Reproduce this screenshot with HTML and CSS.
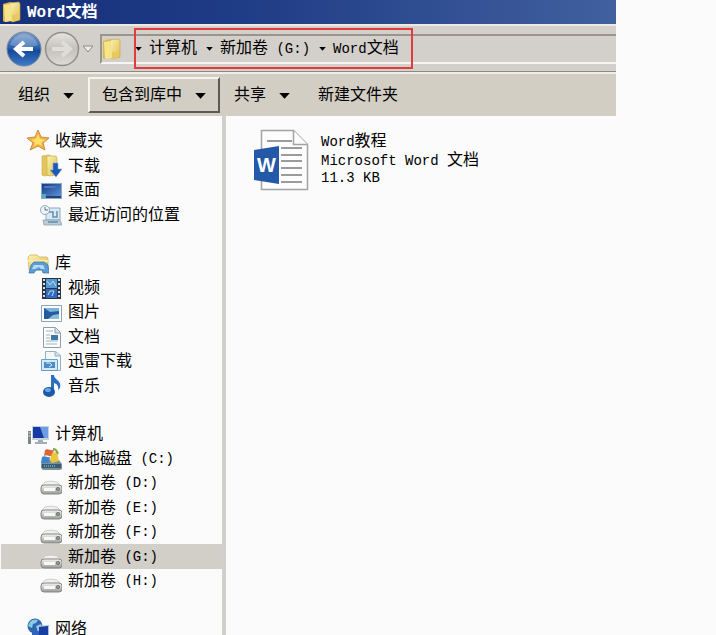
FILE: index.html
```
<!DOCTYPE html>
<html lang="zh-CN">
<head>
    <meta charset="UTF-8">
    <meta name="viewport" content="width=device-width, initial-scale=1.0">
    <title>Word文档</title>
    <link rel="stylesheet" href="styles.css">
</head>
<body>
    <svg class="defs" aria-hidden="true">
        <defs>
            <linearGradient id="yellow" x1="0" y1="0" x2="1" y2="1">
                <stop offset="0" stop-color="#fbf3b4"/>
                <stop offset="1" stop-color="#dfbd4e"/>
            </linearGradient>
            <linearGradient id="blue" x1="0" y1="0" x2="1" y2="1">
                <stop offset="0" stop-color="#173a86"/>
                <stop offset="1" stop-color="#5b92d8"/>
            </linearGradient>
            <linearGradient id="metal" x1="0" y1="0" x2="0" y2="1">
                <stop offset="0" stop-color="#f4f4f2"/>
                <stop offset="1" stop-color="#9a9c9a"/>
            </linearGradient>
            <linearGradient id="back-fill" x1="0" y1="0" x2="0" y2="1">
                <stop offset="0" stop-color="#7f9fcb"/>
                <stop offset="0.45" stop-color="#2c62ae"/>
                <stop offset="0.55" stop-color="#164a98"/>
                <stop offset="1" stop-color="#3f7cc8"/>
            </linearGradient>
            <linearGradient id="next-fill" x1="0" y1="0" x2="0" y2="1">
                <stop offset="0" stop-color="#e6e4e0"/>
                <stop offset="0.5" stop-color="#c4c1bb"/>
                <stop offset="1" stop-color="#dedbd6"/>
            </linearGradient>
        </defs>
        <symbol id="folder" viewBox="0 0 20 22">
            <path d="M1 3l7-2 3 1v17l-8 2-2-1z" fill="#d9b84c"/>
            <path d="M8 2l9-1 1 2v16l-8 2-2-3z" fill="url(#yellow)" stroke="#c9a43c" stroke-width=".6"/>
            <path d="M2 4l6-1 2 17-7 1z" fill="#f6e588"/>
            <path d="M10 14l7-1v6l-7 2z" fill="#e7c95f"/>
        </symbol>
        <symbol id="star" viewBox="0 0 22 24">
            <path d="M11 1l3 7 8 1-6 5 2 7-7-4-8 4 3-7-6-5 8-1z" fill="#f6b53c" stroke="#c98a4a"/>
            <path d="M11 5l2 5 5 1-4 3 1 3-4-2-4 2 1-4-4-2 5-1z" fill="#ffe16a"/>
        </symbol>
        <symbol id="download" viewBox="0 0 22 24">
            <path d="M2 2l7-1 2 1v19l-7 1-2-1z" fill="#e4c65c" stroke="#c7a74a" stroke-width=".6"/>
            <path d="M7 2h9l1 2v17l-8 1-2-2z" fill="url(#yellow)" stroke="#c7a74a" stroke-width=".6"/>
            <path d="M13 9h5v6h4l-6 8-6-7h3z" fill="#1e57b5" stroke="#7fa7dc" stroke-width=".6"/>
        </symbol>
        <symbol id="desktop" viewBox="0 0 22 24">
            <path d="M1 5h21v16H1z" fill="#8ea9c8"/>
            <path d="M2 6h19v12H2z" fill="url(#blue)"/>
            <path d="M4 8h13l-3 2H4z" fill="#5078bd"/>
            <path d="M2 18h19v2H2z" fill="#23406f"/>
            <path d="M2 16h4v4H2z" fill="#58a8cc"/>
        </symbol>
        <symbol id="recent" viewBox="0 0 22 24">
            <path d="M6 5h14v12H6z" fill="#dbe8f3" stroke="#8daac2"/>
            <path d="M3 17h17l2 5H4z" fill="#b9cbd9" stroke="#849bab" stroke-width=".7"/>
            <path d="M9 9h4v5h4V8M8 19h10" fill="none" stroke="#618eae" stroke-width="1.5"/>
            <circle cx="5" cy="7" r="4.5" fill="#eef4f8" stroke="#96aabc"/>
            <path d="M5 4v3h3" fill="none" stroke="#54728c"/>
        </symbol>
        <symbol id="library" viewBox="0 0 22 24">
            <path d="M1 6l2-2h7l2 2h8l1 2v11H2z" fill="url(#yellow)" stroke="#cfaa53" stroke-width=".7"/>
            <path d="M1 9h20v2H1z" fill="#f8eba6"/>
            <path d="M4 14l3-3h10l4 3 1 8h-6l-1-3h-6l-2 3H2z" fill="#5b9dd6" stroke="#376fae" stroke-width=".7"/>
            <path d="M7 14h9l2 4h-4l-2-2-4 2H5z" fill="#b5dcf3"/>
        </symbol>
        <symbol id="video" viewBox="0 0 22 24">
            <path d="M2 2h19v21H2z" fill="#2b3442"/>
            <path d="M6 3h11v9H6z" fill="#5598d4"/>
            <path d="M6 13h11v9H6z" fill="#2f6cc0"/>
            <path d="M7 5l3 4 3-4 3 5M8 19l2-4h4l-2 5" fill="none" stroke="#bcdcf3"/>
            <path d="M4 3v20M19 3v20" stroke="#d5dde5" stroke-width="2" stroke-dasharray="2 2"/>
        </symbol>
        <symbol id="picture" viewBox="0 0 22 24">
            <path d="M1.500 5.500h20v16h-20z" fill="#fbfcfd" stroke="#8ca5b9"/>
            <path d="M4 8h15v11H4z" fill="#7db3dc"/>
            <path d="M4 8l6 4 9-1v8H4z" fill="#245b9f"/>
            <path d="M8 19l5-4 6-1v5z" fill="#8bbbd6"/>
        </symbol>
        <symbol id="document" viewBox="0 0 22 24">
            <path d="M3.500 2.500h12l5 5v15h-17z" fill="#fafcfd" stroke="#8f9da8"/>
            <path d="M15 3v5h5" fill="#d9e1e7" stroke="#8f9da8"/>
            <path d="M6 6h7M6 10h4M6 13h4M6 16h12M6 19h11" stroke="#9eb1bf"/>
            <path d="M11 10h7v5h-7z" fill="#3b79a8"/>
        </symbol>
        <symbol id="thunder" viewBox="0 0 22 24">
            <path d="M5.500 2.500h10l5 4v15h-15z" fill="#f2f7fa" stroke="#8fb0c5"/>
            <path d="M15 3v4h5" fill="#d0e1ec" stroke="#8fb0c5"/>
            <path d="M1.500 10.500h16v11h-16z" fill="#d5eaf7" stroke="#6c9fc5"/>
            <path d="M4 13h11v6H4z" fill="#4b8cc9"/>
            <path d="M6 14h4l2 2-3 2" fill="none" stroke="#d4ecfa"/>
        </symbol>
        <symbol id="music" viewBox="0 0 22 24">
            <path d="M11 1h3c0 5 8 5 6 13l-2 2c1-4-1-6-4-7v9H11z" fill="#2b6fbf"/>
            <ellipse cx="9" cy="18" rx="6" ry="5" fill="#1d59a9"/>
            <ellipse cx="8" cy="16" rx="3" ry="2" fill="#6ba6de"/>
        </symbol>
        <symbol id="computer" viewBox="0 0 22 24">
            <path d="M1 9h3v13H1z" fill="#7f8585"/>
            <path d="M1.500 11h2M1.500 14h2" stroke="#dadddd"/>
            <path d="M5 4h17v14H5z" fill="#c8d1da"/>
            <path d="M6 5h15v11H6z" fill="#1539a5"/>
            <path d="M13 5h8v11h-4z" fill="#6c9ee5"/>
            <path d="M11 18h5v2h4v2H8v-2h3z" fill="#a1acb4"/>
        </symbol>
        <symbol id="system" viewBox="0 0 22 24">
            <path d="M3 13h16l3 4v5l-2 1H3l-2-2v-4z" fill="#7d9092"/>
            <path d="M2 17h19v4H2z" fill="#365c78"/>
            <path d="M4 19h11" stroke="#b1d1dd" stroke-dasharray="1 1"/>
            <path d="M5 3c3-2 5 1 9 0l-2 6c-3 1-5-2-8 0z" fill="#dc6436"/>
            <path d="M2 10c3-2 5 1 8 0l-1 6H1z" fill="#3e83cd"/>
            <path d="M12 6l5-1 2 9-7 2-2-3z" fill="#eac53e"/>
            <path d="M13 2c4 0 4 3 5 5" fill="none" stroke="#83a447" stroke-width="2"/>
        </symbol>
        <symbol id="drive" viewBox="0 0 22 24">
            <path d="M5 11q6-2 12 0l4 4H1z" fill="#f0f0ee" stroke="#bfc0be" stroke-width=".7"/>
            <rect x="1" y="14" width="21" height="9" rx="3" fill="url(#metal)" stroke="#858785"/>
            <path d="M4 17h11v3H4z" fill="#f8f8f7"/>
            <circle cx="18" cy="18" r="2" fill="#64716a"/>
            <circle cx="18" cy="18" r=".8" fill="#a4d1a7"/>
        </symbol>
        <symbol id="network" viewBox="0 0 22 24">
            <circle cx="8" cy="9" r="7.500" fill="#2e68b2"/>
            <path d="M3 5c2-3 6-3 8-2l-2 3-3 1-1 4-4-2zM9 9l5-2 1 4-4 4z" fill="#8bcbe0"/>
            <path d="M11 9l11-1v11l-11 2z" fill="#a8bdd7"/>
            <path d="M12 10l9-1v9l-9 2z" fill="#1740a2"/>
            <path d="M5 15l7-1v8H5z" fill="#3162bc"/>
        </symbol>
    </svg>

    <header class="window-head">
        <div class="title-bar">
            <svg class="title-icon" aria-hidden="true"><use href="#folder"/></svg>
            <h1><span class="latin">Word</span>文档</h1>
        </div>

        <div class="nav-bar">
            <button class="round" aria-label="后退">
                <svg viewBox="0 0 36 36">
                    <circle cx="18" cy="18" r="17" fill="url(#back-fill)" stroke="#6f86a5"/>
                    <path d="M4 14a14.500 14.500 0 0 1 28 0q-14 5-28 0z" fill="#fff" opacity=".22"/>
                    <path d="M27 18H11M18 11l-8 7 8 7" fill="none" stroke="#fff" stroke-width="4"/>
                </svg>
            </button>
            <button class="round" aria-label="前进">
                <svg viewBox="0 0 36 36">
                    <circle cx="18" cy="18" r="16.500" fill="url(#next-fill)" stroke="#8f8e8b" stroke-width="1.500"/>
                    <path d="M8 18h17M18 11l8 7-8 7" fill="none" stroke="#dfddd9" stroke-width="4"/>
                </svg>
            </button>
            <button class="history" aria-label="最近浏览">
                <svg viewBox="0 0 12 8"><path d="M1 1h10L6 7z" fill="#eeece8" stroke="#8e8b85"/></svg>
            </button>
            <div class="address">
                <svg class="address-icon" aria-hidden="true"><use href="#folder"/></svg>
                <nav class="crumbs" aria-label="路径">
                    <a href="#">计算机</a>
                    <a href="#">新加卷<span class="latin"> (G:)</span></a>
                    <a href="#"><span class="latin">Word</span>文档</a>
                </nav>
            </div>
        </div>

        <div class="toolbar">
            <button class="tool menu">组织</button>
            <button class="tool menu raised">包含到库中</button>
            <button class="tool menu">共享</button>
            <button class="tool">新建文件夹</button>
        </div>
    </header>

    <div class="body">
        <aside class="tree">
            <section class="group">
                <a href="#" class="row root"><svg><use href="#star"/></svg>收藏夹</a>
                <a href="#" class="row"><svg><use href="#download"/></svg>下载</a>
                <a href="#" class="row"><svg><use href="#desktop"/></svg>桌面</a>
                <a href="#" class="row"><svg><use href="#recent"/></svg>最近访问的位置</a>
            </section>
            <section class="group">
                <a href="#" class="row root"><svg><use href="#library"/></svg>库</a>
                <a href="#" class="row"><svg><use href="#video"/></svg>视频</a>
                <a href="#" class="row"><svg><use href="#picture"/></svg>图片</a>
                <a href="#" class="row"><svg><use href="#document"/></svg>文档</a>
                <a href="#" class="row"><svg><use href="#thunder"/></svg>迅雷下载</a>
                <a href="#" class="row"><svg><use href="#music"/></svg>音乐</a>
            </section>
            <section class="group">
                <a href="#" class="row root"><svg><use href="#computer"/></svg>计算机</a>
                <a href="#" class="row"><svg><use href="#system"/></svg>本地磁盘<span class="latin"> (C:)</span></a>
                <a href="#" class="row"><svg><use href="#drive"/></svg>新加卷<span class="latin"> (D:)</span></a>
                <a href="#" class="row"><svg><use href="#drive"/></svg>新加卷<span class="latin"> (E:)</span></a>
                <a href="#" class="row"><svg><use href="#drive"/></svg>新加卷<span class="latin"> (F:)</span></a>
                <a href="#" class="row selected"><svg><use href="#drive"/></svg>新加卷<span class="latin"> (G:)</span></a>
                <a href="#" class="row"><svg><use href="#drive"/></svg>新加卷<span class="latin"> (H:)</span></a>
            </section>
            <section class="group">
                <a href="#" class="row root"><svg><use href="#network"/></svg>网络</a>
            </section>
        </aside>

        <main class="files">
            <a href="#" class="file">
                <span class="file-icon">
                    <svg viewBox="0 0 56 62" aria-hidden="true">
                        <path d="M8.500 1.500h32l14 14v45h-46z" fill="#fdfdfd" stroke="#a3a3a3" stroke-width="1.500"/>
                        <path d="M40.500 1.500v14h14" fill="#fdfdfd" stroke="#a3a3a3" stroke-width="1.500"/>
                        <path d="M14 12h25M28 19h21M28 26h21M28 32h21M28 39h21M28 46h21M28 53h21" stroke="#9b9b9b" stroke-width="2"/>
                        <path d="M1 21l25-4v38L1 51z" fill="#2458a8"/>
                    </svg>
                    <b>W</b>
                </span>
                <span class="file-info">
                    <span><span class="latin">Word</span>教程</span>
                    <span><span class="latin">Microsoft Word </span>文档</span>
                    <span class="latin">11.3 KB</span>
                </span>
            </a>
        </main>
    </div>
</body>
</html>
```
FILE: styles.css
```
* {
    box-sizing: border-box;
}

body {
    display: flex;
    flex-direction: column;
    height: 100vh;
    margin: 0;
    overflow: hidden;
    background: #fbfbfb;
    color: #000;
    font-family: "Liberation Sans", "Noto Sans CJK SC", sans-serif;
    font-size: 16px;
    line-height: 24px;
}

a {
    color: inherit;
    text-decoration: none;
}

button {
    padding: 0;
    border: none;
    background: none;
    color: inherit;
    font: inherit;
}

svg {
    display: block;
    flex: none;
}

.defs {
    position: absolute;
    width: 0;
    height: 0;
}

.latin {
    font-family: "Liberation Mono", monospace;
    font-size: 14px;
    white-space: pre;
}

/* 窗口顶部 */
.window-head {
    flex: none;
    margin-right: 100px;
    background: #d2cec6;
}

.title-bar {
    display: flex;
    align-items: center;
    gap: 5px;
    height: 24px;
    padding-left: 2px;
    background: linear-gradient(to right, #17307a, #1f3c86 40%, #41609e);
    color: #fff;
}

.title-icon {
    width: 20px;
    height: 22px;
}

.title-bar h1 {
    margin: 0;
    font-size: 16px;
}

.title-bar .latin {
    font-size: 16px;
}

.nav-bar {
    display: flex;
    align-items: center;
    height: 48px;
    padding-left: 6px;
    border-top: 2px solid #eceae4;
    border-bottom: 1px solid #8d8a82;
    background: #d3cfca;
}

.round {
    width: 36px;
    height: 36px;
    margin-right: 2px;
}

.history {
    width: 12px;
    margin-right: 6px;
}

.address {
    display: flex;
    flex: 1;
    align-items: center;
    height: 30px;
    border-top: 2px solid #99958a;
    border-left: 2px solid #99958a;
    border-bottom: 2px solid #f6f5f2;
}

.address-icon {
    width: 20px;
    height: 22px;
}

.crumbs {
    position: relative;
    display: flex;
    margin-left: 4px;
    white-space: nowrap;
}

/* 红色标注框 */
.crumbs::after {
    content: "";
    position: absolute;
    inset: -8px -14px -8px 8px;
    border: 2px solid #e23b3b;
    pointer-events: none;
}

.crumbs a::before,
.menu::after {
    content: "";
    display: inline-block;
    vertical-align: middle;
    background: #000;
    clip-path: polygon(0 0, 100% 0, 50% 100%);
}

.crumbs a::before {
    width: 7px;
    height: 4px;
    margin: 0 7px 0 9px;
}

.toolbar {
    display: flex;
    align-items: center;
    height: 44px;
    padding-left: 4px;
    border-top: 2px solid #efede8;
    background: #d2cec4;
}

.tool {
    height: 36px;
    padding: 0 14px;
    white-space: nowrap;
}

.menu::after {
    width: 11px;
    height: 6px;
    margin-left: 13px;
}

.raised {
    padding: 0 12px;
    border: 2px solid;
    border-color: #f6f4f0 #5c5a56 #5c5a56 #f6f4f0;
}

/* 左侧导航 */
.body {
    display: flex;
    flex: 1;
    min-height: 0;
}

.tree {
    display: flex;
    flex: none;
    flex-direction: column;
    gap: 24px;
    width: 226px;
    padding: 13px 0 0 1px;
    border-right: 4px solid #d2d0cd;
    overflow: hidden;
}

.row {
    display: flex;
    align-items: center;
    gap: 6px;
    height: 24px;
    padding-left: 39px;
    white-space: nowrap;
}

.row:nth-child(even) {
    height: 25px;
}

.root {
    padding-left: 26px;
}

.row svg {
    width: 22px;
    height: 24px;
}

.row .latin {
    margin-left: -6px;
}

.selected {
    background: #d2cec8;
}

/* 文件列表 */
.files {
    flex: 1;
    padding: 13px 27px;
}

.file {
    display: flex;
    gap: 12px;
}

.file-icon {
    position: relative;
    width: 56px;
    height: 62px;
}

.file-icon b {
    position: absolute;
    top: 24px;
    left: 4px;
    color: #fff;
    font-size: 20px;
}

.file-info {
    display: flex;
    flex-direction: column;
    padding-top: 3px;
    line-height: 17px;
    white-space: nowrap;
}
```
